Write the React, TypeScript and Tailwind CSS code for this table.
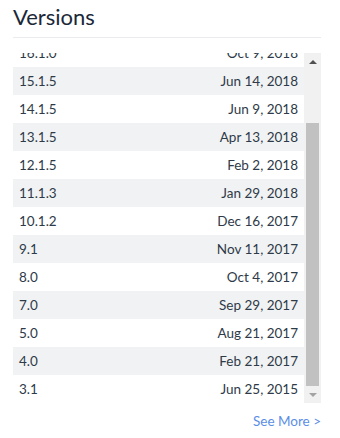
const versions = [
  { name: '16.1.0', date: 'Oct 9, 2018' },
  { name: '15.1.5', date: 'Jun 14, 2018' },
  { name: '14.1.5', date: 'Jun 9, 2018' },
  { name: '13.1.5', date: 'Apr 13, 2018' },
  { name: '12.1.5', date: 'Feb 2, 2018' },
  { name: '11.1.3', date: 'Jan 29, 2018' },
  { name: '10.1.2', date: 'Dec 16, 2017' },
  { name: '9.1', date: 'Nov 11, 2017' },
  { name: '8.0', date: 'Oct 4, 2017' },
  { name: '7.0', date: 'Sep 29, 2017' },
  { name: '5.0', date: 'Aug 21, 2017' },
  { name: '4.0', date: 'Feb 21, 2017' },
  { name: '3.1', date: 'Jun 25, 2015' }
]

export default function App() {
  return (
    <div className="h-[438px] w-[340px] bg-white pl-[13px] pr-[19px] pt-[3px] font-['Lato',sans-serif]">
      <h2 className="text-[22px] leading-[28px] text-[#1b2838]">Versions</h2>
      <div className="mt-[6px] border-t border-[#e9ebee]" />

      <div className="mt-[15px] flex h-[350px]">
        {/* list is scrolled to the bottom, first row partly hidden */}
        <div className="flex-1 overflow-hidden">
          <div className="-mt-[14px]">
            {versions.map((v, i) => (
              <div
                key={v.name}
                className={`flex h-[28px] items-center justify-between px-[6px] text-[13.5px] text-[#2e3a48] ${i % 2 === 1 ? 'bg-[#f1f2f4]' : 'bg-white'}`}
              >
                <span>{v.name}</span>
                <span>{v.date}</span>
              </div>
            ))}
          </div>
        </div>

        <div className="flex w-[17px] flex-col bg-[#f1f1f1]">
          <div className="flex h-[17px] items-center justify-center">
            <svg width="8" height="4" viewBox="0 0 8 4">
              <path d="M0 4 L4 0 L8 4 Z" fill="#505050" />
            </svg>
          </div>
          <div className="flex flex-1 flex-col justify-end px-[2px]">
            <div className="h-[263px] bg-[#c1c1c1]" />
          </div>
          <div className="flex h-[17px] items-center justify-center">
            <svg width="8" height="4" viewBox="0 0 8 4">
              <path d="M0 0 L8 0 L4 4 Z" fill="#a3a3a3" />
            </svg>
          </div>
        </div>
      </div>

      <div className="mt-[8px] flex justify-end">
        <a className="text-[13.5px] text-[#5b8ee6]">See More &gt;</a>
      </div>
    </div>
  )
}
